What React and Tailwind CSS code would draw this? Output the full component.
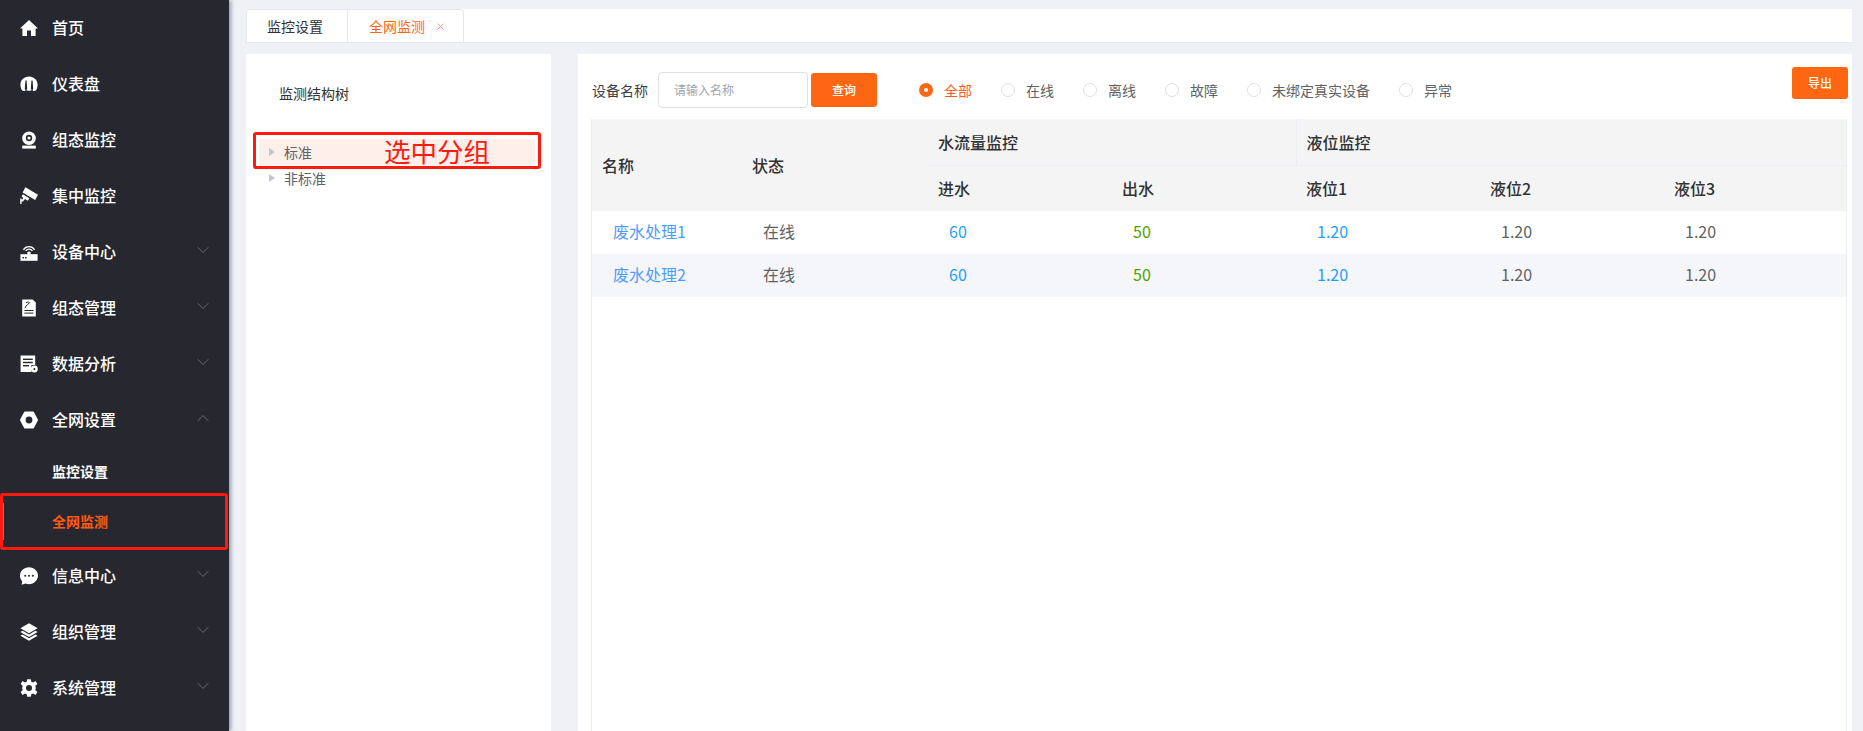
import React from "react";
import { ChevronDown, ChevronUp, X } from "lucide-react";

const font = { fontFamily: '"Noto Sans CJK SC", "Noto Sans", sans-serif' };

const HomeIcon = () => (
  <svg viewBox="0 0 18 18" className="w-[18px] h-[18px]" fill="currentColor">
    <path d="M9 1 L18 9.6 L15.6 9.6 L15.6 17 L11 17 L11 11.5 L7 11.5 L7 17 L2.4 17 L2.4 9.6 L0 9.6 Z" />
  </svg>
);

const GaugeIcon = () => (
  <svg viewBox="0 0 18 18" className="w-[18px] h-[18px]">
    <path fill="currentColor" d="M9 1.4 C4 1.4 0.4 5 0.4 9.6 C0.4 12.6 1.2 14.6 2.6 15.8 C3.8 16.4 5 16 5.4 15.2 L7.4 15.2 L7.4 15.8 L10.6 15.8 L10.6 15.2 L12.6 15.2 C13 16 14.2 16.4 15.4 15.8 C16.8 14.6 17.6 12.6 17.6 9.6 C17.6 5 14 1.4 9 1.4 Z" />
    <path fill="#27272f" d="M5.4 5.4 L6.6 5.4 L7.2 14 L5.8 15.6 L4.8 14 Z" />
    <path fill="#27272f" d="M12.6 5.4 L11.4 5.4 L10.8 14 L12.2 15.6 L13.2 14 Z" />
  </svg>
);

const WebcamIcon = () => (
  <svg viewBox="0 0 18 18" className="w-[18px] h-[18px]">
    <circle cx="9" cy="7.2" r="6.8" fill="currentColor" />
    <circle cx="9" cy="7" r="3.2" fill="#27272f" />
    <circle cx="9" cy="7" r="1.6" fill="currentColor" />
    <path fill="currentColor" d="M2.2 14.6 L15.8 14.6 L15.8 17.6 L2.2 17.6 Z" />
  </svg>
);

const CctvIcon = () => (
  <svg viewBox="0 0 18 18" className="w-[18px] h-[18px]" fill="currentColor">
    <path d="M5.4 0.2 L18 7.8 L15.2 13 L2.6 5.4 Z" />
    <path d="M2.8 7.2 L9.4 11.2 L7.8 13.8 L5 12 L3 14.6 L1.6 14.6 L1.6 17 L0.2 17 L0.2 11.4 L1.6 11.4 L1.6 13.2 L3.4 11 L1.6 9.6 Z" />
  </svg>
);

const RouterIcon = () => (
  <svg viewBox="0 0 18 18" className="w-[18px] h-[18px]">
    <path d="M0.4 11.2 H17.6 V17.8 H0.4 Z" fill="currentColor" />
    <path d="M3.4 6.8 A6.6 6.6 0 0 1 14.6 6.8" fill="none" stroke="currentColor" strokeWidth="1.3" />
    <path d="M5.6 8 A4 4 0 0 1 12.4 8" fill="none" stroke="currentColor" strokeWidth="1.3" />
    <path d="M7.4 9.4 A2 2 0 0 1 10.6 9.4 L10.6 11.4 L7.4 11.4 Z" fill="currentColor" />
    <rect x="2.4" y="14" width="1.6" height="1.4" fill="#27272f" />
    <rect x="5" y="14" width="1.6" height="1.4" fill="#27272f" />
  </svg>
);

const DocIcon = () => (
  <svg viewBox="0 0 18 18" className="w-[18px] h-[18px]">
    <path d="M2.2 0.4 H12.6 L15.8 3.6 V17.6 H2.2 Z" fill="currentColor" />
    <path d="M5 9.2 C5.6 6 9.6 4.6 9.6 3.6 C9.6 2.8 7.4 3 6 3.8" fill="none" stroke="#27272f" strokeWidth="1" />
    <rect x="4.4" y="11" width="9" height="1" fill="#27272f" />
    <rect x="4.4" y="13.6" width="9" height="1" fill="#27272f" />
  </svg>
);

const ReportIcon = () => (
  <svg viewBox="0 0 18 18" className="w-[18px] h-[18px]">
    <path d="M0.6 0.4 H15.2 V10 H11.4 V17 H0.6 Z" fill="currentColor" />
    <rect x="3" y="3.6" width="9.8" height="1.4" fill="#27272f" />
    <rect x="3" y="6.8" width="9.8" height="1.4" fill="#27272f" />
    <rect x="3" y="10" width="6" height="1.4" fill="#27272f" />
    <circle cx="14.4" cy="14" r="3.4" fill="currentColor" />
    <circle cx="14.4" cy="14" r="1" fill="#27272f" />
  </svg>
);

const NutIcon = () => (
  <svg viewBox="0 0 18 18" className="w-[18px] h-[18px]">
    <path d="M5 1.6 H13 L17 9 L13 16.4 H5 L1 9 Z" fill="currentColor" strokeLinejoin="round" stroke="currentColor" strokeWidth="2" />
    <circle cx="9" cy="9" r="3.4" fill="#27272f" />
  </svg>
);

const ChatIcon = () => (
  <svg viewBox="0 0 18 18" className="w-[18px] h-[18px]">
    <path d="M9 0.2 C4 0.2 0 3.8 0 8.6 C0 11 0.8 12.9 2.2 14.4 L1.6 17.8 L5.6 16.6 C6.6 17 7.8 17.2 9 17.2 C14 17.2 18 13.4 18 8.6 C18 3.8 14 0.2 9 0.2 Z" fill="currentColor" />
    <circle cx="5.2" cy="8.8" r="1" fill="#27272f" />
    <circle cx="9" cy="8.8" r="1" fill="#27272f" />
    <circle cx="12.8" cy="8.8" r="1" fill="#27272f" />
  </svg>
);

const LayersIcon = () => (
  <svg viewBox="0 0 18 18" className="w-[18px] h-[18px]" fill="currentColor">
    <path d="M9 0.2 L17.6 5.2 L9 10.2 L0.4 5.2 Z" />
    <path d="M2.6 7.8 L9 11.5 L15.4 7.8 L17.6 9 L9 14 L0.4 9 Z" />
    <path d="M2.6 11.6 L9 15.3 L15.4 11.6 L17.6 12.8 L9 17.8 L0.4 12.8 Z" />
  </svg>
);

const GearIcon = () => (
  <svg viewBox="0 0 18 18" className="w-[18px] h-[18px]">
    <path fill="currentColor" d="M7.2 0.2 H10.8 L11.3 2.7 L13.1 3.5 L15.4 2.1 L17.4 5 L15.3 6.7 L15.7 8 V10 L15.3 11.3 L17.4 13 L15.4 15.9 L13.1 14.5 L11.3 15.3 L10.8 17.8 H7.2 L6.7 15.3 L4.9 14.5 L2.6 15.9 L0.6 13 L2.7 11.3 L2.3 10 V8 L2.7 6.7 L0.6 5 L2.6 2.1 L4.9 3.5 L6.7 2.7 Z" />
    <circle cx="9" cy="9" r="3" fill="#27272f" />
  </svg>
);

const menus = [
  { name: "首页", icon: <HomeIcon /> },
  { name: "仪表盘", icon: <GaugeIcon /> },
  { name: "组态监控", icon: <WebcamIcon /> },
  { name: "集中监控", icon: <CctvIcon /> },
  { name: "设备中心", icon: <RouterIcon />, arrow: "down" },
  { name: "组态管理", icon: <DocIcon />, arrow: "down" },
  { name: "数据分析", icon: <ReportIcon />, arrow: "down" },
  { name: "全网设置", icon: <NutIcon />, arrow: "up", open: true },
  { name: "信息中心", icon: <ChatIcon />, arrow: "down" },
  { name: "组织管理", icon: <LayersIcon />, arrow: "down" },
  { name: "系统管理", icon: <GearIcon />, arrow: "down" },
];

const MenuRow = ({ item }) => (
  <div className="flex items-center h-14 pl-[20px] pr-[16px] text-white">
    <span className="w-[18px] h-[18px] shrink-0 flex mb-[1px]">{item.icon}</span>
    <span className="ml-[14px] pb-[2px] text-base font-medium">{item.name}</span>
    {item.arrow === "down" && (
      <ChevronDown className="ml-auto mb-[5px] w-5 h-5 text-[#7a7a85]" strokeWidth={1} />
    )}
    {item.arrow === "up" && (
      <ChevronUp className="ml-auto mb-[5px] w-5 h-5 text-[#7a7a85]" strokeWidth={1} />
    )}
  </div>
);

const Sidebar = () => (
  <aside className="w-[229px] shrink-0 h-full bg-[#27272f] shadow-[2px_0_4px_rgba(40,50,80,0.45)] z-10">
    {menus.map((item) => (
      <div key={item.name}>
        <MenuRow item={item} />
        {item.open && (
          <div>
            <div className="flex items-center h-[50px] pl-[52px] pb-[5px] text-sm font-bold text-white">监控设置</div>
            <div className="relative flex items-center h-[50px] pl-[52px] pb-[5px] text-sm font-bold text-[#ff5a14]">
              <span className="absolute left-[2px] top-[5px] w-[2px] h-[37px] bg-[#ff5a14]" />
              全网监测
              <div className="absolute left-0 top-[-5px] w-[228px] h-[57px] border-[3px] border-[#ff1a10] rounded-[3px]" />
            </div>
          </div>
        )}
      </div>
    ))}
  </aside>
);

const TreeArrow = () => (
  <span className="w-0 h-0 border-y-[4px] border-y-transparent border-l-[6px] border-l-[#c0c4cc]" />
);

const TreePanel = () => (
  <div className="w-[305px] shrink-0 bg-white text-sm">
    <div className="pl-[33px] pt-[29px] h-[78px] text-[#303133]">监测结构树</div>
    <div className="relative mt-[7px] ml-[13px] mr-[16px] h-[26px] flex items-center pl-[10px] bg-[#fdf0ea] text-[#606266]">
      <TreeArrow />
      <span className="ml-[9px]">标准</span>
      <div className="absolute left-[-6px] top-[-7px] right-[-6px] bottom-[-4px] border-[3px] border-[#ff1a10] rounded-[3px]" />
      <span className="absolute left-[125px] top-[-7px] text-[26.5px] leading-[38px] text-[#ff1a10]">选中分组</span>
    </div>
    <div className="ml-[13px] h-[26px] flex items-center pl-[10px] text-[#606266]">
      <TreeArrow />
      <span className="ml-[9px]">非标准</span>
    </div>
  </div>
);

const radios = ["全部", "在线", "离线", "故障", "未绑定真实设备", "异常"];

const Radio = ({ name, checked }) => (
  <label className="flex items-center gap-[11px]">
    {checked ? (
      <span className="w-[14px] h-[14px] rounded-full bg-[#ff6611] flex items-center justify-center">
        <span className="w-1 h-1 rounded-full bg-white" />
      </span>
    ) : (
      <span className="w-[14px] h-[14px] rounded-full border border-[#dcdfe6] bg-white" />
    )}
    <span className={checked ? "text-[#ff5a1f]" : "text-[#606266]"}>{name}</span>
  </label>
);

const Toolbar = () => (
  <div className="flex items-start h-[65px] text-sm">
    <div className="flex items-center mt-[18px] h-9">
      <span className="text-[#3c3e42] w-[67px] pl-[1px]">设备名称</span>
      <div className="w-[150px] h-9 border border-[#dcdfe6] rounded-[4px] flex items-center pl-[15px] text-xs text-[#a0a3aa]">
        请输入名称
      </div>
      <button className="ml-[3px] w-[66px] h-[34px] rounded-[3px] bg-[#ff6611] text-white text-xs font-medium">
        查询
      </button>
      <div className="flex items-center gap-[29px] ml-[42px]">
        {radios.map((name, index) => (
          <Radio key={name} name={name} checked={index === 0} />
        ))}
      </div>
    </div>
    <button className="ml-auto mr-[-1px] mt-[13px] w-[56px] h-[32px] rounded-[3px] bg-[#ff6611] text-white text-xs font-medium">
      导出
    </button>
  </div>
);

const rows = [
  { name: "废水处理1", status: "在线", in: 60, out: 50, a: "1.20", b: "1.20", c: "1.20" },
  { name: "废水处理2", status: "在线", in: 60, out: 50, a: "1.20", b: "1.20", c: "1.20" },
];

const DataTable = () => (
  <div className="flex-1 border-x border-[#ebeef5] min-h-0">
    <table className="w-full table-fixed border-collapse text-base">
      <colgroup>
        <col className="w-[151px]" />
        <col className="w-[185px]" />
        <col className="w-[184px]" />
        <col className="w-[184px]" />
        <col className="w-[184px]" />
        <col className="w-[184px]" />
        <col />
      </colgroup>
      <thead className="bg-[#f4f4f4] text-[#303133] text-left font-medium">
        <tr className="h-[46px]">
          <th rowSpan={2} className="pl-[10px] font-medium">名称</th>
          <th rowSpan={2} className="pl-[9px] font-medium">状态</th>
          <th colSpan={2} className="pl-[10px] font-medium border-b border-[#ebeef5]">水流量监控</th>
          <th colSpan={3} className="pl-[10px] font-medium border-b border-l border-[#ebeef5]">液位监控</th>
        </tr>
        <tr className="h-[46px]">
          <th className="pl-[10px] font-medium">进水</th>
          <th className="pl-[10px] font-medium">出水</th>
          <th className="pl-[10px] font-medium">液位1</th>
          <th className="pl-[10px] font-medium">液位2</th>
          <th className="pl-[10px] font-medium">液位3</th>
        </tr>
      </thead>
      <tbody>
        {rows.map((row, index) => (
          <tr key={row.name} className={index % 2 ? "h-[43px] bg-[#f5f6fa]" : "h-[43px] bg-white"}>
            <td className="pl-[21px] pb-[3px] text-[#4f9bff]">{row.name}</td>
            <td className="pl-[20px] pb-[3px] text-[#606266]">{row.status}</td>
            <td className="pl-[21px] pb-[3px] text-[#1e9fff]">{row.in}</td>
            <td className="pl-[21px] pb-[3px] text-[#52a000]">{row.out}</td>
            <td className="pl-[21px] pb-[3px] text-[#1e9fff]">{row.a}</td>
            <td className="pl-[21px] pb-[3px] text-[#606266]">{row.b}</td>
            <td className="pl-[21px] pb-[3px] text-[#606266]">{row.c}</td>
          </tr>
        ))}
      </tbody>
    </table>
  </div>
);

const Tabs = () => (
  <div className="flex h-[34px] bg-white border-b border-[#e4e7ed] text-sm">
    <div className="w-[102px] flex items-center pl-[20px] border-x border-t border-[#e4e7ed] rounded-tl-[4px] text-[#303133]">监控设置</div>
    <div className="w-[116px] flex items-center pl-[21px] border-r border-t border-[#e4e7ed] rounded-tr-[4px] text-[#ff6611]">
      全网监测
      <X className="ml-[10px] w-[11px] h-[11px] text-[#ff7b6b]" strokeWidth={1.5} />
    </div>
  </div>
);

export default function App() {
  return (
    <div className="flex h-screen overflow-hidden bg-[#eff1f6]" style={font}>
      <Sidebar />
      <main className="flex-1 min-w-0 pl-[17px] pr-[11px] pt-[9px] flex flex-col">
        <Tabs />
        <div className="flex flex-1 min-h-0 mt-[11px] gap-[27px]">
          <TreePanel />
          <div className="flex-1 min-w-0 bg-white pl-[13px] pr-[5px] flex flex-col">
            <Toolbar />
            <DataTable />
          </div>
        </div>
      </main>
    </div>
  );
}
